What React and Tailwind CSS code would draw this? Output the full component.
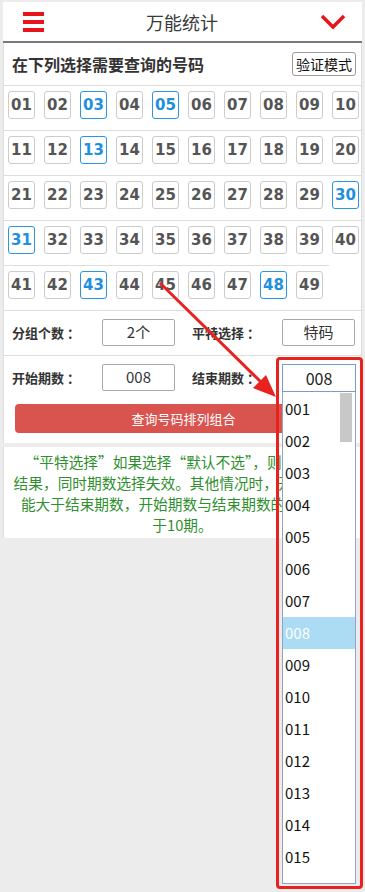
import { useState } from "react";

const picked = ["03", "05", "13", "30", "31", "43", "48"];

const rows = [
    Array.from({ length: 10 }, (_, i) => String(i + 1).padStart(2, "0")),
    Array.from({ length: 10 }, (_, i) => String(i + 11)),
    Array.from({ length: 10 }, (_, i) => String(i + 21)),
    Array.from({ length: 10 }, (_, i) => String(i + 31)),
    Array.from({ length: 9 }, (_, i) => String(i + 41)),
];

const options = Array.from({ length: 15 }, (_, i) => String(i + 1).padStart(3, "0"));

const cjk = "font-['Noto_Sans_CJK_SC','Noto_Sans',sans-serif]";

const App = () => {
    const [end] = useState("008");

    return (
        <div className={`relative w-[365px] h-[892px] overflow-hidden bg-[#ececec] pt-[2px] ${cjk}`}>
            {/* Header */}
            <div className="mx-[3px] h-[41px] bg-white border-b-2 border-[#7a7a7a] flex items-center justify-between px-[20px]">
                <div className="flex flex-col gap-[4px] w-[21px]">
                    <span className="block h-[4px] bg-[#e8141c]"></span>
                    <span className="block h-[4px] bg-[#e8141c]"></span>
                    <span className="block h-[4px] bg-[#e8141c]"></span>
                </div>
                <h1 className="text-[18px] text-[#3a3a3a] leading-none">万能统计</h1>
                <svg width="26" height="16" viewBox="0 0 26 16" className="mr-[-4px]">
                    <path d="M2 2 L13 13 L24 2" fill="none" stroke="#e8141c" strokeWidth="3.5" />
                </svg>
            </div>

            {/* Main panel */}
            <div className="mx-[3px] bg-white border-x border-[#dddddd]">
                {/* Title */}
                <div className="h-[43px] flex items-center justify-between pl-[8px] pr-[5px] border-b border-[#dddddd]">
                    <h2 className="text-[16px] font-bold text-[#333333] leading-none">在下列选择需要查询的号码</h2>
                    <button className="h-[24px] px-[3px] border border-[#999999] rounded-[3px] text-[14px] text-[#111111] leading-none bg-white">
                        验证模式
                    </button>
                </div>

                {/* Number grid */}
                {rows.map((row, r) => (
                    <div
                        key={r}
                        className={`pl-[4px] pt-[5px] pb-[11px] flex gap-[9px] ${r === 3 ? "border-b border-transparent relative" : "border-b border-[#dddddd]"}`}
                    >
                        {row.map((n) => (
                            <div
                                key={n}
                                className={`w-[27px] h-[28px] rounded-[3px] border flex items-center justify-center font-['DejaVu_Sans',sans-serif] font-bold text-[15px] ${picked.includes(n) ? "border-[#2b95e0] text-[#1f8fe0]" : "border-[#cccccc] text-[#555555]"}`}
                            >
                                {n}
                            </div>
                        ))}
                        {r === 3 && <span className="absolute left-0 bottom-[-1px] w-[325px] h-px bg-[#dddddd]"></span>}
                    </div>
                ))}

                {/* Form row 1 */}
                <div className="pl-[8px] pt-[8px] pb-[9px] flex items-center border-b border-[#dddddd]">
                    <span className="w-[90px] text-[13px] font-bold text-[#333333]">分组个数 ：</span>
                    <div className="w-[73px] h-[27px] border border-[#aaaaaa] rounded-[2px] flex items-center justify-center text-[15px] text-[#333333]">2个</div>
                    <span className="ml-[17px] w-[90px] text-[13px] font-bold text-[#333333]">平特选择 ：</span>
                    <div className="w-[73px] h-[27px] border border-[#aaaaaa] rounded-[2px] flex items-center justify-center text-[15px] text-[#333333]">特码</div>
                </div>

                {/* Form row 2 + button */}
                <div className="pt-[8px] pb-[10px]">
                    <div className="pl-[8px] flex items-center">
                        <span className="w-[90px] text-[13px] font-bold text-[#333333]">开始期数 ：</span>
                        <div className="w-[73px] h-[27px] border border-[#aaaaaa] rounded-[2px] flex items-center justify-center text-[15px] text-[#333333]">008</div>
                        <span className="ml-[17px] w-[90px] text-[13px] font-bold text-[#333333]">结束期数 ：</span>
                        {/* the end select sits in the open dropdown overlay */}
                        <div className="w-[73px] h-[27px]"></div>
                    </div>
                    <button className="mt-[13px] ml-[11px] w-[337px] h-[29px] rounded-[4px] bg-[#d9534f] text-white text-[13px] leading-none">
                        查询号码排列组合
                    </button>
                </div>
            </div>

            {/* Note */}
            <div className="mx-[3px] mt-[4px] bg-white border-x border-[#dddddd] pt-[4px] pb-[3px] text-center text-[14.7px] leading-[21px] text-[#2f8f2f] whitespace-nowrap">
                <span className="[font-feature-settings:'fwid']">“平特选择”如果选择“默认不选”，则显示全部</span><br />
                结果，同时期数选择失效。其他情况时，开始期数不<br />
                能大于结束期数，开始期数与结束期数的差不能大<br />
                于10期。
            </div>

            {/* Annotation arrow */}
            <svg className="absolute left-0 top-0 pointer-events-none" width="365" height="892">
                <line x1="160" y1="283" x2="264" y2="385" stroke="#e8231f" strokeWidth="3" />
                <polygon points="276,397 253,388 266,375" fill="#e8231f" />
            </svg>

            {/* Open select dropdown, framed by the annotation */}
            <div className="absolute left-[276px] top-[357px] w-[87px] h-[532px] border-[3px] border-[#e8231f] rounded-[4px] pt-[4px] pl-[3px]">
                <div className="w-[74px] h-[28px] border border-[#7a9bd0] bg-white flex items-center justify-center text-[16px] text-[#222222]">
                    {end}
                </div>
                <div className="relative w-[74px] h-[492px] border border-t-0 border-[#8ea4c8] bg-white overflow-hidden">
                    <span className="absolute right-[3px] top-[1px] w-[12px] h-[49px] bg-[#c8c8c8]"></span>
                    <div className="pt-[1px]">
                        {options.map((o) => (
                            <div
                                key={o}
                                className={`h-[32px] flex items-center pl-[2px] text-[15px] ${o === end ? "bg-[#abdcf3] text-white" : "text-[#111111]"}`}
                            >
                                {o}
                            </div>
                        ))}
                    </div>
                </div>
            </div>
        </div>
    );
};

export default App;
